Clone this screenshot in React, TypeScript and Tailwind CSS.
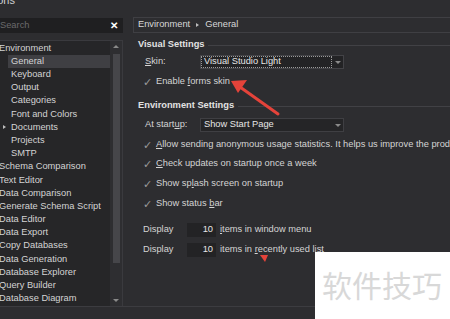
import React from 'react';

const tree: { label: string; level: number; arrow?: boolean; selected?: boolean }[] = [
  { label: 'Environment', level: 0 },
  { label: 'General', level: 1, selected: true },
  { label: 'Keyboard', level: 1 },
  { label: 'Output', level: 1 },
  { label: 'Categories', level: 1 },
  { label: 'Font and Colors', level: 1 },
  { label: 'Documents', level: 1, arrow: true },
  { label: 'Projects', level: 1 },
  { label: 'SMTP', level: 1 },
  { label: 'Schema Comparison', level: 0 },
  { label: 'Text Editor', level: 0 },
  { label: 'Data Comparison', level: 0 },
  { label: 'Generate Schema Script', level: 0 },
  { label: 'Data Editor', level: 0 },
  { label: 'Data Export', level: 0 },
  { label: 'Copy Databases', level: 0 },
  { label: 'Data Generation', level: 0 },
  { label: 'Database Explorer', level: 0 },
  { label: 'Query Builder', level: 0 },
  { label: 'Database Diagram', level: 0 },
];

function Check({ children, className = '' }: { children: React.ReactNode; className?: string }) {
  return (
    <div className={`flex h-[14px] items-center ${className}`}>
      <span className="w-[14px] shrink-0 pl-px text-[11px] text-[#9a9a9a]">✓</span>
      <span className="whitespace-nowrap">{children}</span>
    </div>
  );
}

function SectionHeader({ title, className = '' }: { title: string; className?: string }) {
  return (
    <div className={`flex h-[12px] items-center ${className}`}>
      <span className="whitespace-nowrap pl-[5px] pr-[4px] font-bold text-[#e2e2e2]">{title}</span>
      <div className="h-px flex-1 bg-[#414145]" />
    </div>
  );
}

function Arrow() {
  return <div className="h-0 w-0 border-x-[3px] border-t-[3px] border-x-transparent border-t-[#8a8a8a]" />;
}

export default function App() {
  return (
    <div
      className="relative h-[319px] w-[450px] overflow-hidden bg-[#2d2d30] text-[9.3px] text-[#d4d4d4]"
      style={{ fontFamily: '"Liberation Sans", Arial, sans-serif' }}
    >
      <div className="h-[12px] overflow-hidden">
        <div className="-ml-[23px] -mt-[6px] text-[11px] leading-[12px] text-[#d0d0d0]">Options</div>
      </div>

      <div className="flex h-[294px]">
        {/* left */}
        <div className="flex w-[123px] shrink-0 flex-col">
          <div className="mt-[6px] flex h-[15px] items-center justify-between bg-[#1f1f21]">
            <span className="text-[#6a6a6c]">Search</span>
            <span className="pr-[5px] text-[10px] font-bold text-white">✕</span>
          </div>
          <div className="mt-[7px] flex flex-1 border-t border-r border-[#3a3a3e] bg-[#262628]">
            <div className="flex-1 pt-px">
              {tree.map((t) => (
                <div
                  key={t.label}
                  className={`relative flex h-[13.2px] items-center whitespace-nowrap ${t.level ? 'pl-[11px]' : '-ml-px'}`}
                >
                  {t.selected && <div className="absolute inset-y-0 left-[8px] right-0 bg-[#3f3f43]" />}
                  {t.arrow && (
                    <div className="absolute left-[3px] top-[4px] h-0 w-0 border-y-[2.5px] border-l-[3px] border-y-transparent border-l-[#bdbdbd]" />
                  )}
                  <span className="relative">{t.label}</span>
                </div>
              ))}
            </div>
            <div className="flex w-[12px] flex-col items-center bg-[#2e2e31]">
              <div className="mt-[4px] h-0 w-0 border-x-[3px] border-b-[3px] border-x-transparent border-b-[#8a8a8a]" />
              <div className="mt-[6px] h-[209px] w-[7px] bg-[#46464a]" />
              <div className="flex-1" />
              <div className="mb-[4px]">
                <Arrow />
              </div>
            </div>
          </div>
        </div>

        {/* right */}
        <div className="ml-[10px] flex min-w-0 flex-1 flex-col">
          <div className="mt-[5px] flex h-[16px] items-center gap-[6px] border border-r-0 border-[#3f3f43] pl-[4px] text-[#d8d8d8]">
            <span>Environment</span>
            <div className="h-0 w-0 border-y-[2.5px] border-l-[3px] border-y-transparent border-l-[#bdbdbd]" />
            <span>General</span>
          </div>

          <SectionHeader title="Visual Settings" className="mt-[6px]" />

          <div className="mt-[4px] flex h-[14px] items-center pl-[12px]">
            <span className="w-[55px] shrink-0">
              <u>S</u>kin:
            </span>
            <div className="flex h-[14px] w-[144px] shrink-0 items-center border border-[#434347] bg-[#232325]">
              <div className="flex h-full flex-1 items-center border border-dotted border-[#9a9a9a] pl-[2px] text-[#e6e6e6]">
                Visual Studio Light
              </div>
              <div className="flex w-[11px] justify-center">
                <Arrow />
              </div>
            </div>
          </div>

          <Check className="mt-[6px] pl-[9px]">
            Enable <u>f</u>orms skin
          </Check>

          <SectionHeader title="Environment Settings" className="mt-[11px]" />

          <div className="mt-[6px] flex h-[14px] items-center pl-[12px]">
            <span className="w-[55px] shrink-0">
              At start<u>u</u>p:
            </span>
            <div className="flex h-[14px] w-[144px] shrink-0 items-center border border-[#3f3f43] bg-[#252527]">
              <div className="flex-1 pl-[3px] text-[#e6e6e6]">Show Start Page</div>
              <div className="flex w-[11px] justify-center">
                <Arrow />
              </div>
            </div>
          </div>

          <Check className="mt-[6px] pl-[9px]">
            <u>A</u>llow sending anonymous usage statistics. It helps us improve the product.
          </Check>
          <Check className="mt-[5px] pl-[9px]">
            <u>C</u>heck updates on startup once a week
          </Check>
          <Check className="mt-[6px] pl-[9px]">
            Show sp<u>l</u>ash screen on startup
          </Check>
          <Check className="mt-[6px] pl-[9px]">
            Show status <u>b</u>ar
          </Check>

          <div className="mt-[12px] flex h-[14px] items-center pl-[10px]">
            <span className="w-[44px] shrink-0">Display</span>
            <div className="flex h-[14px] w-[29px] shrink-0 items-center justify-end bg-[#232325] pr-[3px] text-[#e6e6e6]">10</div>
            <span className="whitespace-nowrap pl-[4px]">
              <u>i</u>tems in window menu
            </span>
          </div>
          <div className="mt-[6px] flex h-[14px] items-center pl-[10px]">
            <span className="w-[44px] shrink-0">Display</span>
            <div className="flex h-[14px] w-[29px] shrink-0 items-center justify-end bg-[#232325] pr-[3px] text-[#e6e6e6]">10</div>
            <span className="whitespace-nowrap pl-[4px]">
              items in <u>r</u>ecently used list
            </span>
          </div>
        </div>
      </div>

      <div className="h-px bg-[#3c3c40]" />

      {/* annotation overlay */}
      <svg className="absolute left-0 top-0" width="450" height="319" viewBox="0 0 450 319">
        <line x1="240" y1="87" x2="278" y2="114" stroke="#e4433a" strokeWidth="3" strokeLinecap="round" />
        <polygon points="231,81 247,80 238,93" fill="#e4433a" />
        <polygon points="260,255 268,255 265,262" fill="#e4433a" />
      </svg>

      {/* watermark */}
      <div className="absolute left-[315px] top-[252px] flex h-[67px] w-[135px] items-start bg-white pl-[7px] pt-[17px]">
        <span
          className="whitespace-nowrap text-[30px] leading-none text-[#d8d8d8]"
          style={{ fontFamily: '"Noto Sans CJK SC", sans-serif' }}
        >
          软件技巧
        </span>
      </div>
    </div>
  );
}
